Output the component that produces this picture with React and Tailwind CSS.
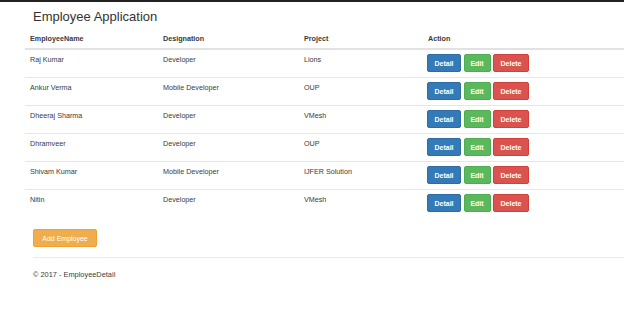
const employees = [
  { name: 'Raj Kumar', designation: 'Developer', project: 'Lions' },
  { name: 'Ankur Verma', designation: 'Mobile Developer', project: 'OUP' },
  { name: 'Dheeraj Sharma', designation: 'Developer', project: 'VMesh' },
  { name: 'Dhramveer', designation: 'Developer', project: 'OUP' },
  { name: 'Shivam Kumar', designation: 'Mobile Developer', project: 'IJFER Solution' },
  { name: 'Nitin', designation: 'Developer', project: 'VMesh' },
];

const Btn = ({ className, children }) => (
  <button
    type="button"
    className={`flex h-[18px] items-center justify-center rounded-[2px] border text-[7px] font-bold leading-none text-white ${className}`}
  >
    {children}
  </button>
);

export default function App() {
  return (
    <div className="h-[312px] w-[624px] overflow-hidden bg-white font-['Liberation_Sans',Arial,sans-serif] text-[#3a3a3a]">
      <div className="h-[2px] bg-[#222]" />

      <h2 className="pl-[33px] pt-[7px] text-[13px] leading-[15px] text-[#333]">Employee Application</h2>

      <div className="ml-[25px] mt-[6px] text-[7.2px] leading-[12px]">
        <div className="flex h-[20px] items-center border-b-2 border-[#e2e2e2] font-bold">
          <div className="w-[133px] pl-[5px]">EmployeeName</div>
          <div className="w-[141px] pl-[5px]">Designation</div>
          <div className="w-[124px] pl-[5px]">Project</div>
          <div className="flex-1 pl-[5px]">Action</div>
        </div>

        {employees.map((e, i) => (
          <div
            key={e.name}
            className={`flex h-[28px] ${i < employees.length - 1 ? 'border-b border-[#e6e6e6]' : ''}`}
          >
            <div className="w-[133px] pl-[5px] pt-[4px]">{e.name}</div>
            <div className="w-[141px] pl-[5px] pt-[4px]">{e.designation}</div>
            <div className="w-[124px] pl-[5px] pt-[4px]">{e.project}</div>
            <div className="flex flex-1 gap-[2.5px] pl-[4px] pt-[4px]">
              <Btn className="w-[34px] border-[#2e6da4] bg-[#337ab7]">Detail</Btn>
              <Btn className="w-[27px] border-[#4cae4c] bg-[#5cb85c]">Edit</Btn>
              <Btn className="w-[36px] border-[#d43f3a] bg-[#d9534f]">Delete</Btn>
            </div>
          </div>
        ))}
      </div>

      <div className="ml-[33px] mt-[11px]">
        <Btn className="w-[64px] border-[#eea236] bg-[#f0ad4e] font-normal">Add Employee</Btn>
      </div>

      <footer className="ml-[33px] mt-[10px] border-t border-[#eaeaea] pt-[11px] text-[7.4px] leading-[12px]">
        © 2017 - EmployeeDetail
      </footer>
    </div>
  );
}
